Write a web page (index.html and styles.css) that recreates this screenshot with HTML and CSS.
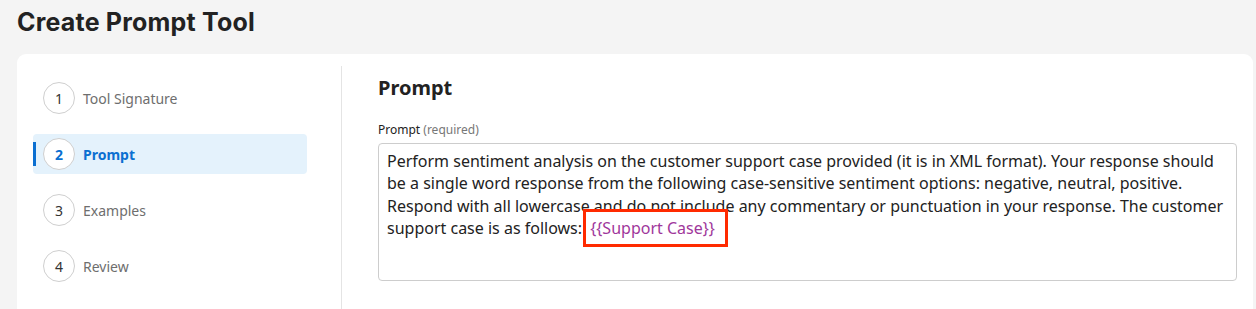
FILE: index.html
```html
<!DOCTYPE html>
<html lang="en">
<head>
<meta charset="utf-8">
<title>Create Prompt Tool</title>
<link rel="stylesheet" href="styles.css">
</head>
<body>
<div class="page">
  <h1 class="title">Create Prompt Tool</h1>
  <div class="card">
    <nav class="steps">
      <div class="step"><span class="num">1</span><span class="label">Tool Signature</span></div>
      <div class="step active"><span class="num">2</span><span class="label">Prompt</span></div>
      <div class="step"><span class="num">3</span><span class="label">Examples</span></div>
      <div class="step"><span class="num">4</span><span class="label">Review</span></div>
    </nav>
    <section class="content">
      <h2 class="heading">Prompt</h2>
      <div class="field-label">Prompt <span class="req">(required)</span></div>
      <div class="textbox">Perform sentiment analysis on the customer support case provided (it is in XML format). Your response should be a single word response from the following case-sensitive sentiment options: negative, neutral, positive. Respond with all lowercase and do not include any commentary or punctuation in your response. The customer support case is as follows: <span class="var">{{Support Case}}</span></div>
    </section>
  </div>
</div>
</body>
</html>
```
FILE: styles.css
```css
* { box-sizing: border-box; }
html, body { margin: 0; padding: 0; }
body {
  background: #f4f4f4;
  font-family: "Noto Sans", "Open Sans", sans-serif;
  color: #222;
  width: 1256px;
  height: 309px;
  overflow: hidden;
}
.page {
  padding: 0 3px 0 17px;
}
.title {
  margin: 0;
  padding-top: 7px;
  height: 54px;
  font-family: Inter, "Noto Sans", sans-serif;
  font-weight: 700;
  font-size: 25px;
  line-height: 30px;
  letter-spacing: 0.2px;
  color: #222;
}
.card {
  background: #fff;
  border-radius: 9px 9px 0 0;
  display: flex;
  padding-top: 12px;
  height: 260px;
}
.steps {
  width: 325px;
  flex: none;
  border-right: 1px solid #e4e4e4;
  padding: 12px 34px 0 16px;
  display: flex;
  flex-direction: column;
  gap: 16px;
}
.step {
  position: relative;
  height: 40px;
  display: flex;
  align-items: center;
  gap: 8px;
  padding-left: 10px;
  border-radius: 4px;
  font-size: 14px;
  color: #6e6e6e;
}
.num {
  width: 32px;
  height: 32px;
  border: 1px solid #cfcfcf;
  border-radius: 50%;
  display: flex;
  align-items: center;
  justify-content: center;
  color: #333;
  font-size: 14px;
  background: #fff;
}
.step.active {
  background: #e4f2fc;
  color: #0b6fd1;
  font-weight: 700;
}
.step.active .num { color: #0b6fd1; }
.step.active::before {
  content: "";
  position: absolute;
  left: 0;
  top: 8px;
  width: 3px;
  height: 24px;
  background: #0b6fd1;
}
.content {
  flex: 1;
  padding: 8px 16px 0 36px;
}
.heading {
  margin: 0;
  font-size: 20px;
  font-weight: 700;
  line-height: 28px;
  color: #222;
}
.field-label {
  margin-top: 20px;
  font-size: 12px;
  line-height: 16px;
  color: #222;
}
.req { color: #777; }
.textbox {
  margin-top: 5px;
  height: 138px;
  border: 1px solid #cdcdcd;
  border-radius: 4px;
  padding: 6px 8px;
  font-size: 16px;
  line-height: 22.4px;
  color: #222;
}
.var {
  color: #a0379b;
  border: 3px solid #ff2a00;
  padding: 5px 10px 5px 4px;
  margin-left: -3px;
}
```
